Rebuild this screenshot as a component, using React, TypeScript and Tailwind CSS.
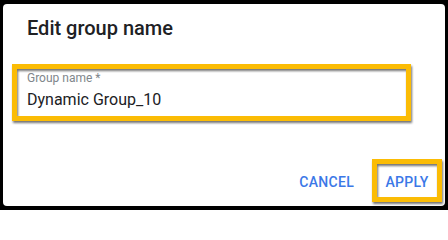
import React from "react";

// ── Highlight frame (annotation overlay) ─────────────────────────────────────
function Highlight() {
  return (
    <div
      aria-hidden
      className="absolute inset-0 border-[5px] border-[#fbbc05] pointer-events-none drop-shadow-[1.5px_2px_1px_rgba(0,0,0,0.55)]"
    />
  );
}

// ── Page ──────────────────────────────────────────────────────────────────────
export default function App() {
  return (
    <div
      className="w-[448px] h-[210px] bg-black pt-[4px] pb-[4px] px-[3px] overflow-hidden"
      style={{ fontFamily: "Roboto, 'Liberation Sans', sans-serif" }}
    >
      <div className="h-full bg-white rounded-[4px] flex flex-col">
        {/* Title */}
        <h2 className="pt-[12px] pl-[24px] text-[20px] leading-[24px] font-medium text-[#202124]">
          Edit group name
        </h2>

        {/* Field */}
        <div className="relative ml-[9px] mt-[24px] w-[399px] h-[57px] p-[5px]">
          <div className="h-full flex flex-col pl-[10px] pt-[1px]">
            <span className="text-[12px] leading-[16px] text-[#80868b]">Group name *</span>
            <span className="mt-[4px] text-[16px] leading-[20px] text-[#202124]">Dynamic Group_10</span>
          </div>
          <Highlight />
        </div>

        {/* Actions */}
        <div className="mt-auto mb-[4px] flex justify-end items-center pr-[3px]">
          <button className="mr-[10px] h-[43px] px-[8px] pt-[3px] text-[14px] leading-[20px] font-medium tracking-[0.3px] text-[#3b78e7]">
            CANCEL
          </button>
          <div className="relative w-[70px] h-[43px] flex items-center justify-center pt-[3px]">
            <span className="text-[14px] leading-[20px] font-medium tracking-[0.3px] text-[#3b78e7]">APPLY</span>
            <Highlight />
          </div>
        </div>
      </div>
    </div>
  );
}
